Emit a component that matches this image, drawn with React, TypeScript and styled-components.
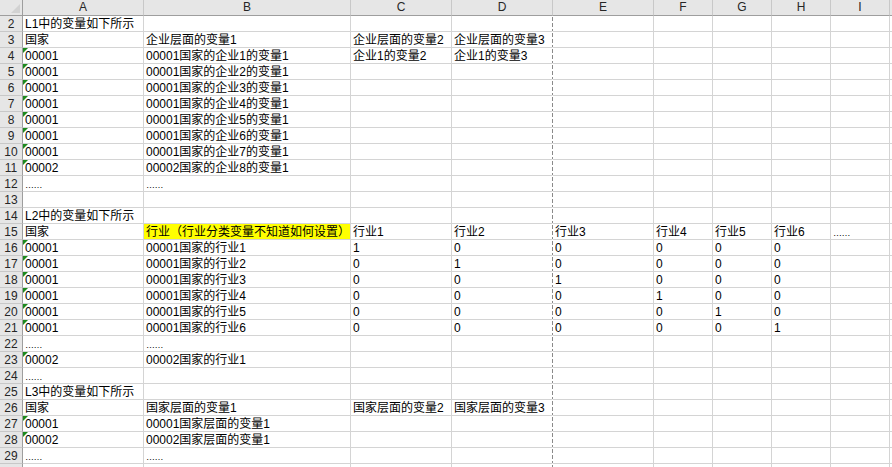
import React from "react";
import styled, { createGlobalStyle, css } from "styled-components";

const GlobalStyle = createGlobalStyle`
  html, body {
    margin: 0;
    padding: 0;
    background: #ffffff;
    overflow: hidden;
  }
  body {
    font-family: "Liberation Sans", "Noto Sans CJK SC", sans-serif;
    font-size: 12px;
    color: #000;
  }
`;

const Sheet = styled.div`
  display: grid;
  grid-template-columns: 23px 121px 207px 101px 101px 101px 59px 59px 59px 59px 1fr;
  grid-auto-rows: 16px;
  width: 892px;
  height: 467px;
  overflow: hidden;
  background: #fff;
`;

const Corner = styled.div`
  position: relative;
  background: #e6e6e6;
  border-right: 1px solid #9e9e9e;
  border-bottom: 1px solid #9e9e9e;
  box-sizing: border-box;

  &::after {
    content: "";
    position: absolute;
    right: 2px;
    bottom: 2px;
    border-left: 9px solid transparent;
    border-bottom: 9px solid #d2d2d2;
  }
`;

const ColHead = styled.div`
  background: #e6e6e6;
  border-right: 1px solid #c8c8c8;
  border-bottom: 1px solid #9e9e9e;
  box-sizing: border-box;
  color: #262626;
  text-align: center;
  line-height: 15px;
`;

const RowHead = styled.div`
  background: #e6e6e6;
  border-right: 1px solid #9e9e9e;
  border-bottom: 1px solid #c8c8c8;
  box-sizing: border-box;
  color: #262626;
  display: flex;
  align-items: flex-end;
  justify-content: center;
  line-height: 14px;
  font-size: 12px;
`;

const Cell = styled.div<{ $yellow?: boolean; $flag?: boolean; $dashed?: boolean }>`
  position: relative;
  box-sizing: border-box;
  border-bottom: 1px solid #d4d4d4;
  border-right: 1px solid #d4d4d4;
  display: flex;
  align-items: flex-end;
  padding: 0 0 0 2px;
  line-height: 13px;
  white-space: nowrap;
  overflow: visible;
  background: ${(p) => (p.$yellow ? "#ffff00" : "transparent")};

  ${(p) =>
    p.$dashed &&
    css`
      border-right: 1px solid transparent;
      background-image: linear-gradient(to bottom, #8a8a8a 0 4px, transparent 4px 100%);
      background-size: 1px 6px;
      background-repeat: repeat-y;
      background-position: right 0 top 1px;
      background-origin: border-box;
    `}

  ${(p) =>
    p.$flag &&
    css`
      &::before {
        content: "";
        position: absolute;
        left: 0;
        top: 0;
        border-top: 5px solid #1e8a1e;
        border-right: 5px solid transparent;
      }
    `}
`;

const Dots = styled.span`
  font-size: 9px;
  letter-spacing: -0.5px;
  line-height: 11px;
`;

const letters = ["A", "B", "C", "D", "E", "F", "G", "H", "I", ""];

type Row = { n: number; v: string[]; flag?: boolean; yellow?: number; hideNum?: boolean };

const rows: Row[] = [];
const push = (n: number, v: string[], flag = false, yellow?: number) =>
  rows.push({ n, v, flag, yellow });

push(2, ["L1中的变量如下所示"]);
push(3, ["国家", "企业层面的变量1", "企业层面的变量2", "企业层面的变量3"]);
push(4, ["00001", "00001国家的企业1的变量1", "企业1的变量2", "企业1的变量3"], true);
for (let i = 2; i <= 7; i++) push(3 + i, ["00001", `00001国家的企业${i}的变量1`], true);
push(11, ["00002", "00002国家的企业8的变量1"], true);
push(12, ["……", "……"]);
push(13, []);
push(14, ["L2中的变量如下所示"]);
push(
  15,
  ["国家", "行业（行业分类变量不知道如何设置）", "行业1", "行业2", "行业3", "行业4", "行业5", "行业6", "……"],
  false,
  1
);
for (let i = 1; i <= 6; i++) {
  const m = [1, 2, 3, 4, 5, 6].map((j) => (j === i ? "1" : "0"));
  push(15 + i, ["00001", `00001国家的行业${i}`, ...m], true);
}
push(22, ["……", "……"]);
push(23, ["00002", "00002国家的行业1"], true);
push(24, ["……"]);
push(25, ["L3中的变量如下所示"]);
push(26, ["国家", "国家层面的变量1", "国家层面的变量2", "国家层面的变量3"]);
push(27, ["00001", "00001国家层面的变量1"], true);
push(28, ["00002", "00002国家层面的变量1"], true);
push(29, ["……", "……"]);
// row 30 only peeks in at the bottom edge; its label is below the fold
rows.push({ n: 30, v: [], hideNum: true });

const renderText = (t: string) => (t === "……" ? <Dots>{t}</Dots> : t);

export default function App() {
  return (
    <>
      <GlobalStyle />
      <Sheet>
        <Corner />
        {letters.map((l, i) => (
          <ColHead key={"h" + i}>{l}</ColHead>
        ))}
        {rows.map((r) => (
          <React.Fragment key={r.n}>
            <RowHead>{r.hideNum ? "" : r.n}</RowHead>
            {letters.map((_, c) => {
              const t = r.v[c] ?? "";
              return (
                <Cell
                  key={c}
                  $flag={r.flag && c === 0}
                  $yellow={r.yellow === c}
                  $dashed={c === 3}
                >
                  {renderText(t)}
                </Cell>
              );
            })}
          </React.Fragment>
        ))}
      </Sheet>
    </>
  );
}
